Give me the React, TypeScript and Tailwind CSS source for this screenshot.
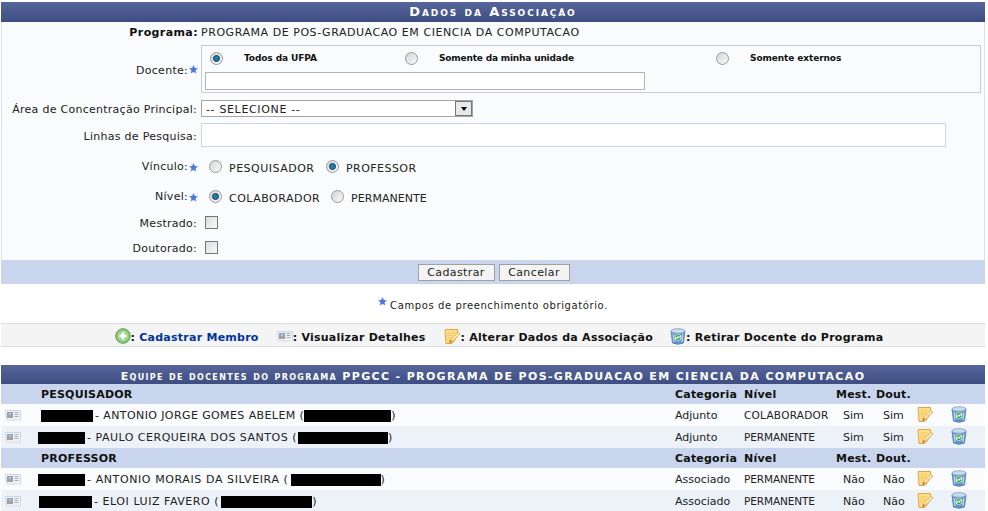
import type { ReactNode } from "react";

const FONT = "font-['DejaVu_Sans','Liberation_Sans',sans-serif]";

function Star() {
	return (
		<svg width="9" height="9" viewBox="0 0 10 10" className="shrink-0">
			<path d="M5 0.3l1.4 3 3.3.4-2.4 2.2.6 3.3L5 7.6 2.100 9.200l.6-3.300L.3 3.700l3.300-.4z" fill="#4a78d6" stroke="#7f9fe0" strokeWidth="0.4" />
		</svg>
	);
}

function Radio({ checked }: { checked?: boolean }) {
	return (
		<span className="inline-flex h-[13px] w-[13px] shrink-0 items-center justify-center rounded-full border border-[#9a9a9a] bg-gradient-to-br from-[#d4d4d4] to-[#fafafa]">
			{checked && <span className="h-[7px] w-[7px] rounded-full border border-[#123f5e] bg-[#1a7fb0]" />}
		</span>
	);
}

function Checkbox() {
	return <span className="inline-block h-[13px] w-[13px] border border-[#777] bg-gradient-to-br from-[#dcdcdc] to-[#fbfbfb]" />;
}

function CardIcon() {
	return (
		<svg width="16" height="13" viewBox="0 0 16 13">
			<path d="M.5 1.500h15v9l-1 1-1-1-1 1-1-1-1 1-1-1-1 1-1-1-1 1-1-1-1 1-1-1-1 1-1-1z" fill="#f0f2f6" stroke="#d0d5de" />
			<rect x="2" y="3" width="6" height="6" fill="#7aa6e4" />
			<rect x="4" y="4" width="2" height="2" fill="#f0c080" />
			<rect x="3.500" y="6" width="3" height="3" fill="#d09a60" />
			<path d="M9.500 3.500h4M9.500 5.500h4M9.500 7.500h4" stroke="#a8afbc" />
		</svg>
	);
}

function AddIcon() {
	return (
		<svg width="16" height="16" viewBox="0 0 16 16">
			<circle cx="8" cy="8" r="7.300" fill="#8cc878" stroke="#5f9f55" />
			<circle cx="8" cy="8" r="5" fill="#a8d898" />
			<path d="M8 4.500v7M4.500 8h7" stroke="#fff" strokeWidth="2.400" />
		</svg>
	);
}

function NoteIcon() {
	return (
		<svg width="17" height="17" viewBox="0 0 17 17">
			<path d="M1 1.500h12.500v6.500L8 15.500H2z" fill="#fcdc84" stroke="#e6a545" />
			<path d="M3 5h8M3 7.500h6M3.500 10h4" stroke="#f4c868" />
			<path d="M16 6l-7.500 7-3 2.300.8-3.300 7.500-7.500z" fill="#fff0b8" stroke="#d3a04a" strokeWidth="0.8" />
			<path d="M5.500 15.300l.8-3.300 2.200 1z" fill="#b57838" />
		</svg>
	);
}

function TrashIcon() {
	return (
		<svg width="16" height="17" viewBox="0 0 16 17">
			<path d="M1 3l1.500 12q5.500 2.500 11 0L15 3z" fill="#5f97c9" stroke="#4f7ba6" strokeWidth="0.8" />
			<ellipse cx="8" cy="3" rx="7" ry="2.300" fill="#c8dcec" stroke="#7f9cb8" strokeWidth="0.8" />
			<path d="M3.300 6l.6 8M12.700 6l-.6 8" stroke="#b8d4ea" strokeWidth="1.400" />
			<circle cx="8" cy="9.500" r="3.300" fill="#eaf5ea" />
			<path d="M6 9.500a2 2 0 0 1 3.500-1.300M10 9.500a2 2 0 0 1-3.500 1.300" stroke="#2f9e3a" strokeWidth="1.500" fill="none" />
		</svg>
	);
}

function FormRow({ label, star, height, children, textClass = "pt-[4px]" }: { label: string; star?: boolean; height: string; children: ReactNode; textClass?: string }) {
	return (
		<div className={`flex items-center ${height}`}>
			<div className={`flex w-[199px] shrink-0 items-center justify-end text-[11px] tracking-[0.27px] text-[#222] ${star ? "pr-[3px]" : "pr-[4px]"}`}>
				<span className={textClass}>{label}</span>
				{star && <span className="ml-[1px] flex"><Star /></span>}
			</div>
			{children}
		</div>
	);
}

function Header({ children, className }: { children: ReactNode; className: string }) {
	return (
		<div className={`bg-gradient-to-b from-[#56659a] to-[#3f4e82] text-center font-bold text-white [font-variant:small-caps] ${className}`}>
			{children}
		</div>
	);
}

function Option({ checked, children, className }: { checked?: boolean; children: string; className: string }) {
	return (
		<>
			<span className="-mt-[2px] flex"><Radio checked={checked} /></span>
			<span className={`ml-[7px] pt-[5px] text-[#222] ${className}`}>{children}</span>
		</>
	);
}

const docentes = [
	{ redact: "w-[52px]", track: "tracking-[0.4px]", name: "- ANTONIO JORGE GOMES ABELEM (", cpf: "w-[87px]", cpfGap: "", cat: "Adjunto", nivel: "COLABORADOR", m: "Sim", d: "Sim" },
	{ redact: "w-[47px] -ml-[3px]", track: "tracking-[0.5px]", name: "- PAULO CERQUEIRA DOS SANTOS (", cpf: "w-[90px]", cpfGap: "ml-[1px]", cat: "Adjunto", nivel: "PERMANENTE", m: "Sim", d: "Sim" },
	{ redact: "w-[47px] -ml-[3px]", track: "tracking-[0.6px]", name: "- ANTONIO MORAIS DA SILVEIRA (", cpf: "w-[90px]", cpfGap: "ml-[2px]", cat: "Associado", nivel: "PERMANENTE", m: "Não", d: "Não" },
	{ redact: "w-[53px] -ml-[2px]", track: "tracking-[0.55px]", name: "- ELOI LUIZ FAVERO (", cpf: "w-[91px]", cpfGap: "ml-[2px]", cat: "Associado", nivel: "PERMANENTE", m: "Não", d: "Não" },
];

function GroupRow({ title }: { title: string }) {
	return (
		<tr className="h-[20px] bg-[#c8d5ec] font-bold tracking-[0.2px] text-[#111] [&>td]:pt-[3px]">
			<td />
			<td>{title}</td>
			<td>Categoria</td>
			<td>Nível</td>
			<td>Mest.</td>
			<td>Dout.</td>
			<td />
			<td />
		</tr>
	);
}

function DocenteRow({ row, alt }: { row: (typeof docentes)[number]; alt?: boolean }) {
	return (
		<tr className={`h-[22px] text-[#222] ${alt ? "bg-[#edf1f8]" : "bg-[#f9fbfd]"}`}>
			<td className="pl-[4px]"><CardIcon /></td>
			<td className={`whitespace-nowrap pt-[3px] ${row.track}`}>
				<span className={`mr-[2px] inline-block h-[12px] bg-black align-middle ${row.redact}`} />
				{row.name}
				<span className={`inline-block h-[12px] bg-black align-middle ${row.cpf} ${row.cpfGap}`} />)
			</td>
			<td className="pt-[3px]">{row.cat}</td>
			<td className={`pt-[2px] text-[10.500px] ${row.nivel === "COLABORADOR" ? "tracking-[0.25px]" : "tracking-[-0.1px]"}`}>{row.nivel}</td>
			<td className="pl-[7px] pt-[3px]">{row.m}</td>
			<td className="pl-[7px] pt-[3px]">{row.d}</td>
			<td className="pb-[2px]"><NoteIcon /></td>
			<td className="pb-[2px] pl-[1px]"><TrashIcon /></td>
		</tr>
	);
}

export default function App() {
	return (
		<div className={`h-[511px] w-[988px] overflow-hidden bg-white ${FONT} text-[11px]`}>
			<div className="ml-[1px] w-[984px] pt-[2px]">
				<Header className="h-[20px] text-[13px] leading-[20px] tracking-[1.9px]">Dados da Associação</Header>

				<div className="h-[238px] border-x border-[#d9e1ef] bg-[#f9fbfd]">
					<div className="flex h-[22px] items-center">
						<div className="w-[196px] text-right font-bold tracking-[0.4px] text-[#111]">Programa:</div>
						<span className="ml-[3px] tracking-[0.55px] text-[#222]">PROGRAMA DE POS-GRADUACAO EM CIENCIA DA COMPUTACAO</span>
					</div>
					<FormRow label="Docente:" star height="h-[50px]">
						<div className="h-[48px] w-[780px] border border-[#c8ccd2] pl-[3px] pt-[6px]">
							<div className="flex h-[20px] items-start text-[9px] font-bold leading-[13px] tracking-[-0.1px] text-[#111]">
								<span className="ml-[5px] flex w-[34px]"><Radio checked /></span>
								<span className="w-[161px]">Todos da UFPA</span>
								<span className="flex w-[34px]"><Radio /></span>
								<span className="w-[277px] tracking-[-0.18px]">Somente da minha unidade</span>
								<span className="flex w-[34px]"><Radio /></span>
								<span>Somente externos</span>
							</div>
							<div className="h-[18px] w-[440px] border border-[#b4b4b4] bg-white" />
						</div>
					</FormRow>
					<FormRow label="Área de Concentração Principal:" height="h-[29px]">
						<div className="flex h-[17px] w-[272px] items-center justify-between border border-[#a5a5a5] bg-white pl-[4px] text-[#222]">
							<span className="pt-[3px] tracking-[0.65px]">-- SELECIONE --</span>
							<span className="flex h-[15px] w-[17px] items-center justify-center border border-[#777] bg-[#e8e8e8]">
								<span className="h-0 w-0 border-x-[3.500px] border-t-[4px] border-x-transparent border-t-black" />
							</span>
						</div>
					</FormRow>
					<FormRow label="Linhas de Pesquisa:" height="h-[24px]">
						<div className="h-[24px] w-[745px] border border-[#c8d5ec] bg-white" />
					</FormRow>
					<FormRow label="Vínculo:" star height="h-[40px]" textClass="">
						<div className="flex items-center pl-[8px]">
							<Option className="w-[97px] tracking-[0.5px]">PESQUISADOR</Option>
							<Option checked className="tracking-[0.45px]">PROFESSOR</Option>
						</div>
					</FormRow>
					<FormRow label="Nível:" star height="h-[20px]" textClass="">
						<div className="flex items-center pl-[8px]">
							<Option checked className="w-[102px] tracking-[0.5px]">COLABORADOR</Option>
							<Option className="tracking-[0.05px]">PERMANENTE</Option>
						</div>
					</FormRow>
					<FormRow label="Mestrado:" height="h-[31px]">
						<span className="ml-[4px] flex"><Checkbox /></span>
					</FormRow>
					<FormRow label="Doutorado:" height="h-[19px]">
						<span className="ml-[4px] flex"><Checkbox /></span>
					</FormRow>
				</div>

				<div className="flex h-[24px] items-center justify-center gap-[4px] bg-[#c8d5ec] pl-[1px]">
					<button className="h-[17px] w-[77px] border border-[#a0a0a0] bg-[#f4f4f4] text-[11px] leading-none tracking-[0.4px] text-[#222]">Cadastrar</button>
					<button className="h-[17px] w-[71px] border border-[#a0a0a0] bg-[#f4f4f4] text-[11px] leading-none tracking-[0.4px] text-[#222]">Cancelar</button>
				</div>

				<div className="flex h-[39px] items-center justify-center gap-[3px] text-[10px] tracking-[0.6px] text-[#222]">
					<span className="-mt-[4px] flex"><Star /></span>
					<span className="pt-[3px]">Campos de preenchimento obrigatório.</span>
				</div>

				<div className="flex h-[24px] items-center justify-center border-y border-[#dcdcdc] bg-[#f4f4f4] pl-[12px] pt-[2px] font-bold tracking-[0.25px] text-[#111] [&>span]:pt-[5px] [&>span.flex]:pt-0">
					<span className="flex"><AddIcon /></span>
					<span>:&nbsp;</span>
					<span className="text-[#003399]">Cadastrar Membro</span>
					<span className="ml-[18px] flex"><CardIcon /></span>
					<span>: Visualizar Detalhes</span>
					<span className="ml-[18px] flex"><NoteIcon /></span>
					<span>: Alterar Dados da Associação</span>
					<span className="ml-[17px] flex"><TrashIcon /></span>
					<span>: Retirar Docente do Programa</span>
				</div>

				<Header className="mt-[18px] h-[19px] pt-[2px] text-[11px] leading-[19px] tracking-[1.350px]">
					Equipe de docentes do programa PPGCC - PROGRAMA DE POS-GRADUACAO EM CIENCIA DA COMPUTACAO
				</Header>

				<table className="w-[984px] table-fixed border-collapse text-[11px]">
					<colgroup>
						<col className="w-[40px]" />
						<col className="w-[634px]" />
						<col className="w-[69px]" />
						<col className="w-[92px]" />
						<col className="w-[40px]" />
						<col className="w-[41px]" />
						<col className="w-[33px]" />
						<col />
					</colgroup>
					<tbody>
						<GroupRow title="PESQUISADOR" />
						<DocenteRow row={docentes[0]} />
						<DocenteRow row={docentes[1]} alt />
						<GroupRow title="PROFESSOR" />
						<DocenteRow row={docentes[2]} />
						<DocenteRow row={docentes[3]} alt />
					</tbody>
				</table>
			</div>
		</div>
	);
}
